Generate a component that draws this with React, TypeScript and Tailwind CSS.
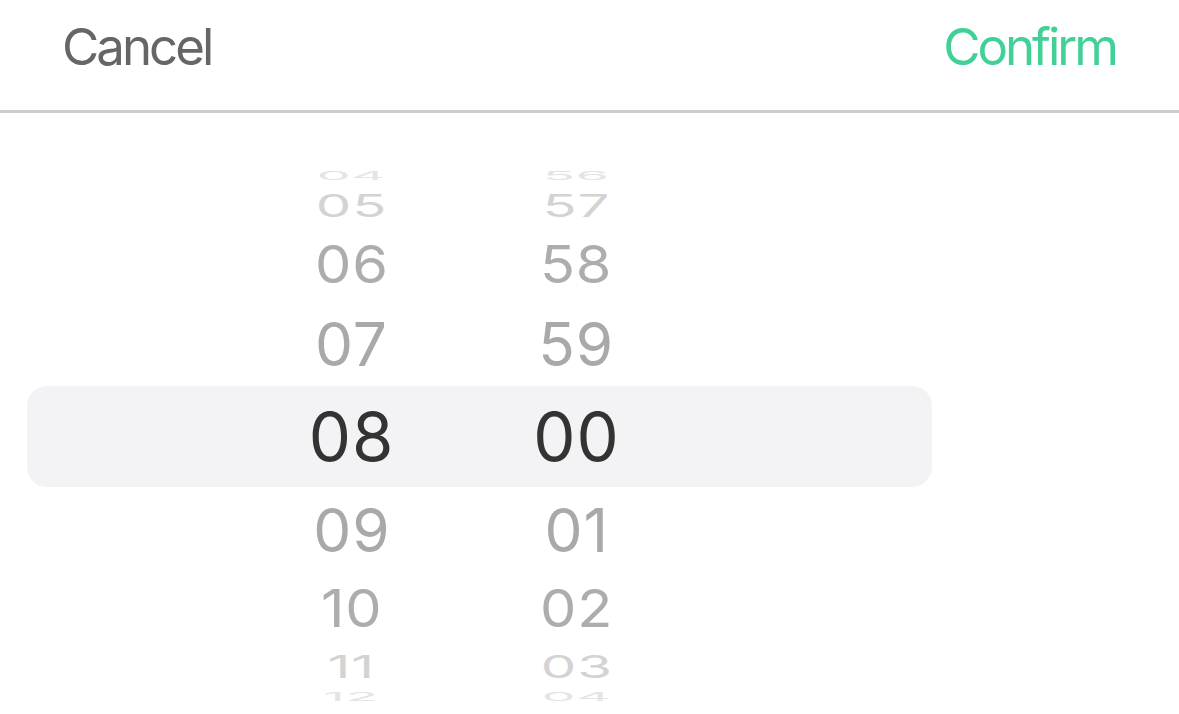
import React from 'react';

// one entry per visible wheel row, top to bottom
const rows = [
  { hour: '04', minute: '56', level: 4, height: 'h-[15px]' },
  { hour: '05', minute: '57', level: 3, height: 'h-[45px]' },
  { hour: '06', minute: '58', level: 2, height: 'h-[72px]' },
  { hour: '07', minute: '59', level: 1, height: 'h-[86px]' },
  { hour: '08', minute: '00', level: 0, height: 'h-[101px]' },
  { hour: '09', minute: '01', level: 1, height: 'h-[85px]' },
  { hour: '10', minute: '02', level: 2, height: 'h-[72px]' },
  { hour: '11', minute: '03', level: 3, height: 'h-[45px]' },
  { hour: '12', minute: '04', level: 4, height: 'h-[15px]' },
];

const levelStyles: Record<number, string> = {
  0: 'text-[#333333]',
  1: 'text-[#a9a9a9] scale-x-[0.9] scale-y-[0.9]',
  2: 'text-[#adadad] scale-x-[0.86] scale-y-[0.77]',
  3: 'text-[#d3d3d3] scale-x-[0.84] scale-y-[0.47]',
  4: 'text-[#e4e4e4] scale-x-[0.8] scale-y-[0.17]',
};

const Cell: React.FC<{ value: string; level: number }> = ({ value, level }) => (
  <div className="w-[225px] flex items-center justify-center">
    <span
      className={`block leading-none text-[67px] tracking-[1px] ${levelStyles[level]}`}
    >
      {value}
    </span>
  </div>
);

const App: React.FC = () => {
  return (
    <div
      className="w-[1179px] h-[714px] bg-white overflow-hidden"
      style={{ fontFamily: 'Inter, "Liberation Sans", sans-serif' }}
    >
      <div className="h-[113px] border-b-[3px] border-[#cccccc] flex items-start justify-between pl-[62px] pr-[63px] pt-[21px]">
        <button className="text-[51px] leading-none text-[#666666] tracking-[-3px]">Cancel</button>
        <button className="text-[51px] leading-none text-[#41d096] tracking-[-3px]">Confirm</button>
      </div>

      <div className="pt-[55px] ml-[27px] w-[905px] flex flex-col">
        {rows.map((row) => (
          <div
            key={row.hour}
            className={`${row.height} flex items-center pl-[212px] ${
              row.level === 0 ? 'bg-[#f3f3f5] rounded-[20px]' : ''
            }`}
          >
            <Cell value={row.hour} level={row.level} />
            <Cell value={row.minute} level={row.level} />
          </div>
        ))}
      </div>
    </div>
  );
};

export default App;
